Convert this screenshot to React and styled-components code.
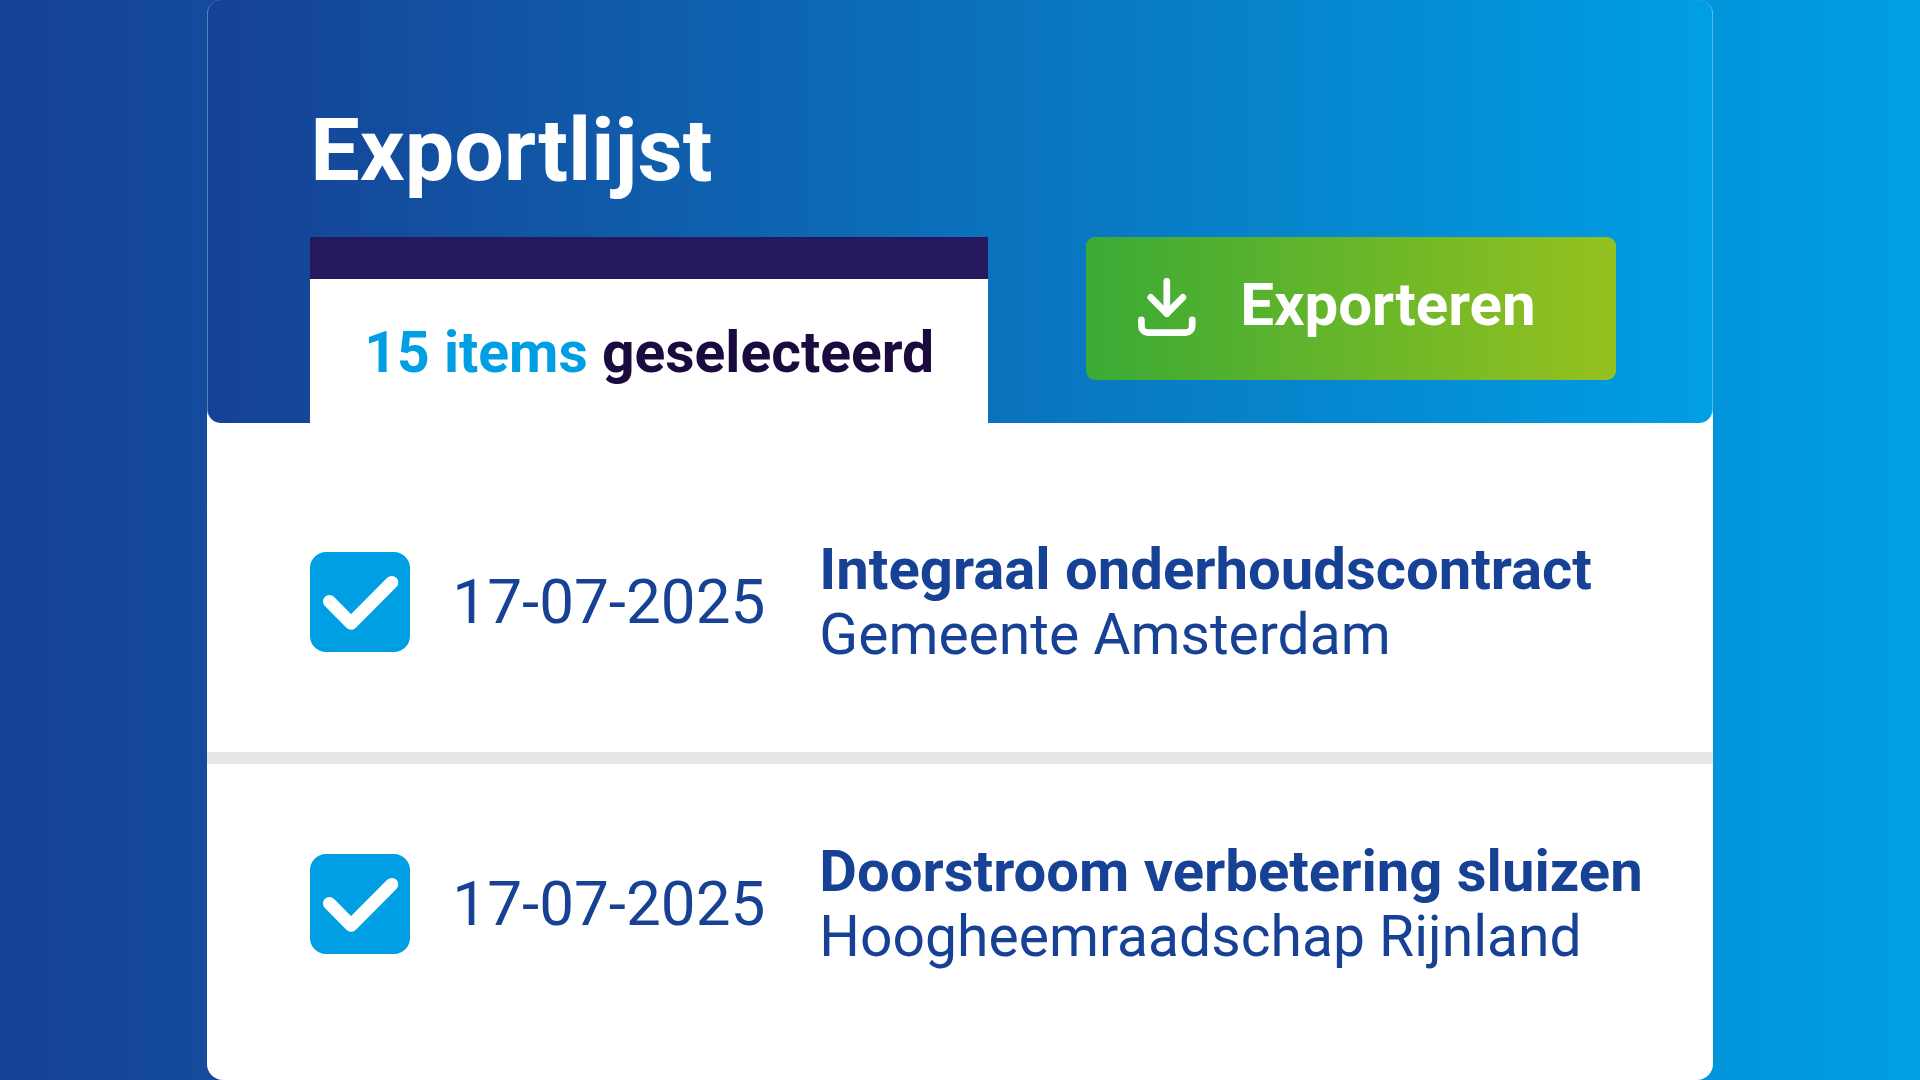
import React, {useState} from 'react';
import styled, {createGlobalStyle} from 'styled-components';

const GlobalStyle = createGlobalStyle`
    * {
        box-sizing: border-box;
    }

    body {
        margin: 0;
        font-family: Roboto, 'Liberation Sans', sans-serif;
        color: #164194;
    }
`;

const Page = styled.main`
    min-height: 100vh;
    display: flex;
    justify-content: center;
    background: linear-gradient(90deg, #164194, #009fe3);
`;

const Card = styled.section`
    width: 78.4%;
    background-color: #fff;
    border-radius: 16px;
`;

const Header = styled.header`
    padding: 100px 96px 0 102px;
    border: solid rgba(255, 255, 255, .3);
    border-width: 0 1px;
    border-radius: 14px;
    background: linear-gradient(90deg, #164194, #009fe3) border-box;
`;

const Title = styled.h1`
    margin: 0 0 37px;
    font-size: 88px;
    font-weight: 700;
    line-height: 100px;
    color: #fff;
`;

const HeaderBar = styled.div`
    display: flex;
    justify-content: space-between;
    align-items: flex-start;
`;

const Tab = styled.p`
    margin: 0;
    padding: 41px 54px 37px;
    border-top: 42px solid #25195d;
    background-color: #fff;
    font-size: 57px;
    font-weight: 700;
    line-height: 66px;
    white-space: nowrap;
    color: #1a0a3e;
`;

const Count = styled.span`
    color: #009fe3;
`;

const ExportButton = styled.button`
    display: flex;
    align-items: flex-end;
    gap: 44px;
    padding: 37px 80px 44px 52px;
    border: 0;
    border-radius: 9px;
    background: linear-gradient(90deg, #3aaa35, #95c11f);
    font-family: inherit;
    font-size: 60px;
    font-weight: 700;
    line-height: 62px;
    color: #fff;
    cursor: pointer;
`;

const List = styled.ul`
    margin: 0;
    padding: 39px 0 26px;
    list-style: none;
`;

const Item = styled.li`
    display: grid;
    grid-template-columns: 100px 325px 1fr;
    column-gap: 42px;
    align-items: center;
    padding: 74px 0 84px 103px;

    & + & {
        border-top: 12px solid #e7e7e7;
    }
`;

const CheckWrap = styled.span`
    position: relative;
    display: block;
    height: 100px;

    svg {
        position: absolute;
        inset: 0;
        pointer-events: none;
    }
`;

const Checkbox = styled.input`
    appearance: none;
    display: block;
    width: 100px;
    height: 100px;
    margin: 0;
    border: 6px solid #009fe3;
    border-radius: 16px;
    background-color: #fff;
    cursor: pointer;

    &:checked {
        background-color: #009fe3;
    }
`;

const ItemDate = styled.time`
    font-size: 62px;
    font-weight: 400;
    line-height: 66px;
    white-space: nowrap;
`;

const ItemLabel = styled.label`
    font-size: 58px;
    line-height: 66px;
    white-space: nowrap;
    cursor: pointer;
`;

const ItemName = styled.strong`
    display: block;
    font-weight: 700;
`;

const Organisation = styled.span`
    display: block;
    font-size: 57px;
    font-weight: 400;
`;

const DownloadIcon = () => (
    <svg width='58' height='58' viewBox='0 0 58 58' fill='none' stroke='currentColor'
        strokeWidth='6.7' strokeLinecap='round' strokeLinejoin='round' aria-hidden='true'>
        <path d='M28.8 3.4V35.6' />
        <path d='M12.7 19.4L28.8 35.6L44.9 19.4' />
        <path d='M3.4 41.8V48a6.6 6.6 0 0 0 6.6 6.6H47.6a6.6 6.6 0 0 0 6.6-6.6V41.8' />
    </svg>
);

const CheckIcon = () => (
    <svg width='100' height='100' viewBox='0 0 100 100' fill='none' stroke='#fff'
        strokeWidth='13' strokeLinecap='round' strokeLinejoin='round' aria-hidden='true'>
        <path d='M19.5 49.5L41 71.3L81.8 30.4' />
    </svg>
);

const items = [
    {id: 1, date: '17-07-2025', iso: '2025-07-17', name: 'Integraal onderhoudscontract', org: 'Gemeente Amsterdam'},
    {id: 2, date: '17-07-2025', iso: '2025-07-17', name: 'Doorstroom verbetering sluizen', org: 'Hoogheemraadschap Rijnland'}
];

const App = () => {
    const [selected, setSelected] = useState([1, 2]);

    const toggle = (id) => {
        setSelected(selected.includes(id) ? selected.filter(el => el !== id) : [...selected, id]);
    };

    return (
        <Page>
            <GlobalStyle />
            <Card>
                <Header>
                    <Title>Exportlijst</Title>
                    <HeaderBar>
                        <Tab><Count>15 items</Count> geselecteerd</Tab>
                        <ExportButton type='button'>
                            <DownloadIcon />
                            Exporteren
                        </ExportButton>
                    </HeaderBar>
                </Header>
                <List>
                    {items.map(item => (
                        <Item key={item.id}>
                            <CheckWrap>
                                <Checkbox
                                    type='checkbox'
                                    id={`item-${item.id}`}
                                    checked={selected.includes(item.id)}
                                    onChange={() => toggle(item.id)}
                                />
                                <CheckIcon />
                            </CheckWrap>
                            <ItemDate dateTime={item.iso}>{item.date}</ItemDate>
                            <ItemLabel htmlFor={`item-${item.id}`}>
                                <ItemName>{item.name}</ItemName>
                                <Organisation>{item.org}</Organisation>
                            </ItemLabel>
                        </Item>
                    ))}
                </List>
            </Card>
        </Page>
    )
}

export default App;
